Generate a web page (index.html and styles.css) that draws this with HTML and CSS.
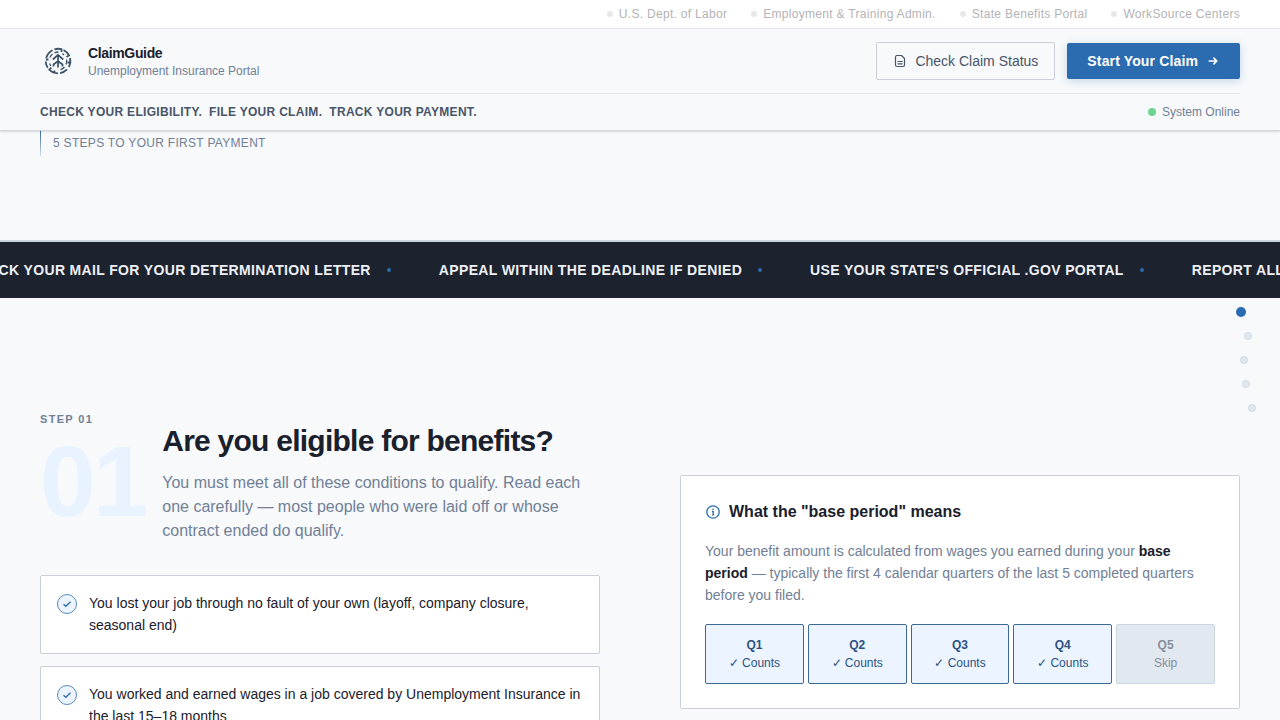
FILE: index.html
```html
<!DOCTYPE html>
<html lang="en">
<head>
<meta charset="utf-8">
<meta name="viewport" content="width=device-width, initial-scale=1">
<title>ClaimGuide – Unemployment Insurance Portal</title>
<link rel="stylesheet" href="styles.css">
</head>
<body>
<nav class="agencies" aria-label="Agencies">
  <a href="#">U.S. Dept. of Labor</a>
  <a href="#">Employment &amp; Training Admin.</a>
  <a href="#">State Benefits Portal</a>
  <a href="#">WorkSource Centers</a>
</nav>
<header class="header">
  <div class="header-main">
    <a class="brand" href="#">
      <svg class="brand-logo" viewBox="0 0 36 36" fill="none" stroke="#3b5266" stroke-width="1.800" aria-hidden="true">
        <path d="M5.800 16.500H8.500M6.200 15A12.300 12.300 0 0 1 12.500 7.200M14.500 6.300A12.300 12.300 0 0 1 21.500 6.200V9M23.500 7A12.300 12.300 0 0 1 29 12.500L26.500 14M30 15A12.300 12.300 0 0 1 28.800 24M30.200 19.500H27.500M27 26.300A12.300 12.300 0 0 1 20 30.100M18 30.300A12.300 12.300 0 0 1 9.300 26.700L11.300 24.700M7.800 24.800A12.300 12.300 0 0 1 5.700 18.500M14.500 30V27.500"/>
        <path stroke-width="1.300" d="M9.800 14.500A9 9 0 0 1 12.500 11M14.500 9.800A9 9 0 0 1 18.500 9M22.500 10.500L24 12M26.600 16.500A9 9 0 0 1 26 21.500M24.500 24A9 9 0 0 1 20.500 26.600M9.500 20.500L10.800 23"/>
        <path stroke-width="1.700" d="M18 24.500V12M12.800 16.500L18 11.800L23.200 16.500M13.500 23.500V21.500L18 18L22.500 21.500V23.500"/>
      </svg>
      <span class="brand-text">
        <strong>ClaimGuide</strong>
        <span>Unemployment Insurance Portal</span>
      </span>
    </a>
    <div class="actions">
      <button class="btn btn-outline" type="button">
        <svg viewBox="0 0 14 14" fill="none" stroke="currentColor" stroke-width="1.200" stroke-linejoin="round" stroke-linecap="round" aria-hidden="true"><path d="M3.500 1.500H8.500L11.500 4.500V11Q11.500 12.500 10 12.500H4Q2.500 12.500 2.500 11V3Q2.500 1.500 4 1.500M5 7.500H9.200M5 9.800H9.200"/></svg>
        Check Claim Status
      </button>
      <button class="btn btn-primary" type="button">
        Start Your Claim
        <svg viewBox="0 0 14 14" fill="none" stroke="currentColor" stroke-width="1.600" stroke-linejoin="round" stroke-linecap="round" aria-hidden="true"><path d="M3.200 7H10.800M7.900 4.100L10.800 7L7.900 9.900"/></svg>
      </button>
    </div>
  </div>
  <div class="header-sub">
    <p class="tagline"><span>Check your eligibility.</span><span>File your claim.</span><span>Track your payment.</span></p>
    <p class="status">System Online</p>
  </div>
</header>
<main>
  <section class="hero-end">
    <p class="hero-note">5 steps to your first payment</p>
  </section>
  <div class="ticker">
    <ul class="ticker-track">
      <li>Check your mail for your determination letter</li>
      <li>Appeal within the deadline if denied</li>
      <li>Use your state's official .gov portal</li>
      <li>Report all income</li>
    </ul>
  </div>
  <section class="step">
    <div class="step-main">
      <p class="step-label">Step 01</p>
      <div class="step-head">
        <span class="step-number" aria-hidden="true">01</span>
        <div>
          <h2>Are you eligible for benefits?</h2>
          <p>You must meet all of these conditions to qualify. Read each one carefully — most people who were laid off or whose contract ended do qualify.</p>
        </div>
      </div>
      <ul class="conditions">
        <li>
          <svg viewBox="0 0 20 20" fill="none" aria-hidden="true"><circle cx="10" cy="10" r="9.500" fill="#ebf4ff" stroke="#5b88b8"/><path d="M6.500 10.200L8.800 12.300L13.500 7.700" stroke="#2b6cb0" stroke-width="1.300"/></svg>
          <span>You lost your job through no fault of your own (layoff, company closure, seasonal end)</span>
        </li>
        <li>
          <svg viewBox="0 0 20 20" fill="none" aria-hidden="true"><circle cx="10" cy="10" r="9.500" fill="#ebf4ff" stroke="#5b88b8"/><path d="M6.500 10.200L8.800 12.300L13.500 7.700" stroke="#2b6cb0" stroke-width="1.300"/></svg>
          <span>You worked and earned wages in a job covered by Unemployment Insurance in the last 15–18 months</span>
        </li>
      </ul>
    </div>
    <aside class="explainer">
      <h3>
        <svg viewBox="0 0 16 16" fill="none" stroke="#2b6cb0" stroke-width="1.300" aria-hidden="true"><circle cx="8" cy="8" r="6.200"/><path d="M8 4.600V5.900M7 7.500H8.200V11M7.200 10.900H9.200"/></svg>
        What the "base period" means
      </h3>
      <p>Your benefit amount is calculated from wages you earned during your <strong>base period</strong> — typically the first 4 calendar quarters of the last 5 completed quarters before you filed.</p>
      <ol class="quarters">
        <li><strong>Q1</strong>✓ Counts</li>
        <li><strong>Q2</strong>✓ Counts</li>
        <li><strong>Q3</strong>✓ Counts</li>
        <li><strong>Q4</strong>✓ Counts</li>
        <li class="skip"><strong>Q5</strong>Skip</li>
      </ol>
    </aside>
  </section>
</main>
<nav class="progress" aria-label="Steps">
  <a class="current" href="#" aria-label="Step 1"></a>
  <a class="d2" href="#" aria-label="Step 2"></a>
  <a class="d3" href="#" aria-label="Step 3"></a>
  <a class="d4" href="#" aria-label="Step 4"></a>
  <a class="d5" href="#" aria-label="Step 5"></a>
</nav>
</body>
</html>
```
FILE: styles.css
```css
* { box-sizing: border-box; margin: 0; padding: 0; }
body {
  background: #f7f9fb;
  color: #1a202c;
  font-family: "Liberation Sans", Arial, sans-serif;
  font-size: 14px;
  line-height: 22px;
}
ul, ol { list-style: none; }
a { color: inherit; text-decoration: none; }
svg { flex: none; }

.agencies {
  display: flex;
  justify-content: flex-end;
  gap: 24px;
  padding: 0 40px;
  background: #fff;
  border-bottom: 1px solid #e8eaec;
  color: #b3b3b5;
  font-size: 12px;
  line-height: 28px;
  letter-spacing: 0.025em;
}
.agencies a { display: flex; align-items: center; gap: 6px; }
.agencies a::before {
  content: "";
  width: 6px;
  height: 6px;
  border-radius: 50%;
  background: #e8e8ea;
}

.header {
  padding: 0 40px;
  border-bottom: 1px solid #d3d7de;
  background: #f7f9fb;
  box-shadow: 0 1px 2px rgba(26, 32, 44, 0.14);
}
.header-main {
  display: flex;
  align-items: center;
  justify-content: space-between;
  padding: 13px 0;
  border-bottom: 1px solid #e2e5ea;
}
.brand { display: flex; align-items: center; gap: 12px; }
.brand-logo { width: 36px; height: 36px; }
.brand-text { display: flex; flex-direction: column; padding-top: 2px; font-size: 12px; line-height: 18px; color: #718096; }
.brand-text strong { font-size: 14px; color: #1a202c; letter-spacing: -0.025em; }
.actions { display: flex; align-items: center; gap: 12px; }
.btn {
  display: flex;
  align-items: center;
  gap: 8px;
  border-radius: 2px;
  font: inherit;
  font-size: 14px;
}
.btn svg { width: 14px; height: 14px; }
.btn-outline {
  height: 38px;
  padding: 0 16px;
  border: 1px solid #cbd0d8;
  background: transparent;
  color: #4a5568;
}
.btn-primary {
  height: 36px;
  padding: 0 20px;
  border: 0;
  background: #2b6cb0;
  color: #fff;
  font-weight: 700;
  letter-spacing: 0.01em;
  box-shadow: 0 2px 8px rgba(43, 108, 176, 0.25);
}
.header-sub {
  display: flex;
  align-items: center;
  justify-content: space-between;
  font-size: 12px;
  line-height: 36px;
}
.tagline {
  display: flex;
  gap: 7px;
  color: #4a5568;
  font-weight: 700;
  text-transform: uppercase;
  letter-spacing: 0.025em;
}
.status { display: flex; align-items: center; gap: 6px; color: #718096; }
.status::before { content: ""; width: 8px; height: 8px; border-radius: 50%; background: #72d492; }

.hero-end { padding: 0 40px 84px; }
.hero-note {
  padding-left: 12px;
  border-left: 1px solid;
  border-image: linear-gradient(#2c5f8a, #dbe3ec) 1;
  color: #718096;
  font-size: 12px;
  line-height: 25px;
  text-transform: uppercase;
  letter-spacing: 0.025em;
}

.ticker { overflow: hidden; border-top: 2px solid #cbd5e0; background: #1c222e; }
.ticker-track {
  display: flex;
  gap: 48px;
  margin-left: -32px;
  white-space: nowrap;
  color: #edf0f5;
  font-weight: 700;
  line-height: 56px;
  text-transform: uppercase;
  letter-spacing: 0.025em;
}
.ticker-track li { display: flex; align-items: center; gap: 16px; }
.ticker-track li::after { content: ""; width: 4px; height: 4px; border-radius: 50%; background: #2b6cb0; }

.step {
  display: grid;
  grid-template-columns: 1fr 1fr;
  gap: 80px;
  align-items: start;
  padding: 115px 40px 80px;
}
.step-label {
  color: #718096;
  font-size: 11px;
  font-weight: 700;
  line-height: 12px;
  text-transform: uppercase;
  letter-spacing: 0.12em;
}
.step-head { display: flex; align-items: flex-start; gap: 16px; }
.step-number {
  color: #e8f3ff;
  font-size: 100px;
  font-weight: 700;
  line-height: 112px;
  letter-spacing: -0.025em;
}
.step-head h2 { margin-bottom: 14px; font-size: 30px; line-height: 32px; letter-spacing: -0.025em; }
.step-head p { color: #718096; font-size: 16px; line-height: 24px; }
.conditions { display: grid; gap: 12px; margin-top: 32px; }
.conditions li {
  display: flex;
  gap: 12px;
  padding: 16px 16px 17px;
  border: 1px solid #cbd0d8;
  border-radius: 2px;
  background: #fff;
}
.conditions svg { width: 20px; height: 20px; margin-top: 2px; }

.explainer {
  margin-top: 62px;
  padding: 24px;
  border: 1px solid #cbd0d8;
  border-radius: 2px;
  background: #fff;
}
.explainer h3 { display: flex; align-items: center; gap: 8px; margin-bottom: 16px; font-size: 16px; line-height: 24px; }
.explainer h3 svg { width: 16px; height: 16px; }
.explainer p { color: #718096; }
.explainer p strong { color: #1a202c; }
.quarters { display: grid; grid-template-columns: repeat(5, 1fr); gap: 4px; margin-top: 18px; }
.quarters li {
  padding: 11px 4px;
  border: 1px solid #3b6a96;
  border-radius: 2px;
  background: #ebf4ff;
  color: #2c5282;
  font-size: 12px;
  line-height: 18px;
  text-align: center;
}
.quarters strong { display: block; }
.quarters .skip { border-color: #cbd5e0; background: #e2e8f0; color: #868e9c; }

/* Scattered step markers floating over the page edge */
.progress a {
  position: fixed;
  right: 28px;
  width: 8px;
  height: 8px;
  border: 1px solid #d0dae6;
  border-radius: 50%;
  background: #dfe6ee;
}
.progress .current { top: 307px; right: 34px; width: 10px; height: 10px; border: 0; background: #2b6cb0; }
.progress .d2 { top: 332px; }
.progress .d3 { top: 356px; right: 32px; }
.progress .d4 { top: 380px; right: 30px; }
.progress .d5 { top: 404px; right: 24px; }
```
